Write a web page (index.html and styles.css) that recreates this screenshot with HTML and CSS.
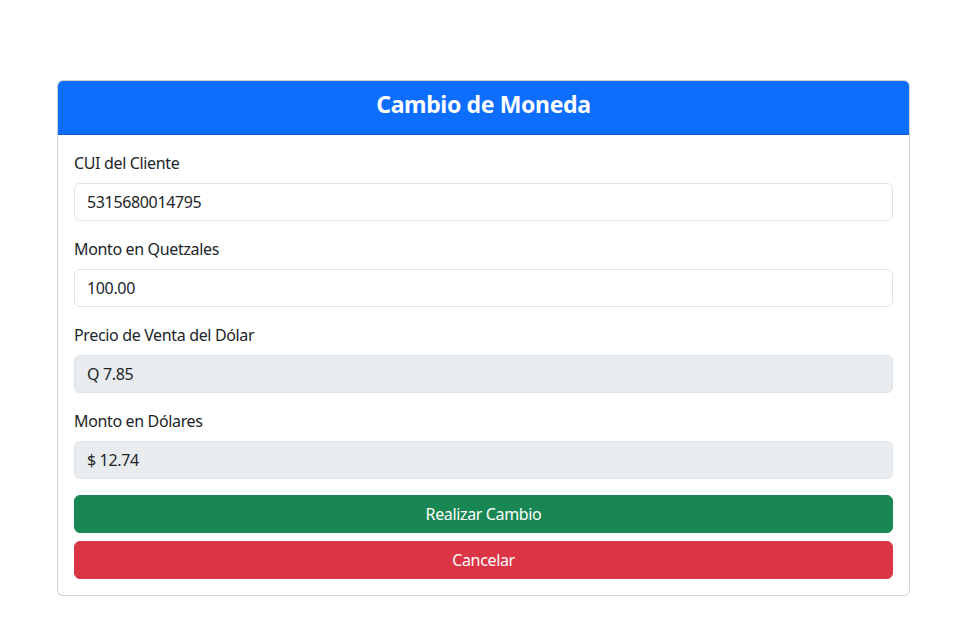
FILE: index.html
```html
<!DOCTYPE html>
<html lang="es">
<head>
<meta charset="utf-8">
<title>Cambio de Moneda</title>
<link rel="stylesheet" href="styles.css">
</head>
<body>
<div class="page">
  <div class="card">
    <div class="card-header">
      <h3 class="title">Cambio de Moneda</h3>
    </div>
    <form class="card-body">
      <div class="field">
        <label class="label">CUI del Cliente</label>
        <div class="input">5315680014795</div>
      </div>
      <div class="field">
        <label class="label">Monto en Quetzales</label>
        <div class="input">100.00</div>
      </div>
      <div class="field">
        <label class="label">Precio de Venta del Dólar</label>
        <div class="input readonly">Q 7.85</div>
      </div>
      <div class="field">
        <label class="label">Monto en Dólares</label>
        <div class="input readonly">$ 12.74</div>
      </div>
      <div class="actions">
        <button type="button" class="btn btn-success">Realizar Cambio</button>
        <button type="button" class="btn btn-danger">Cancelar</button>
      </div>
    </form>
  </div>
</div>
</body>
</html>
```

FILE: styles.css
```css
* { box-sizing: border-box; }
html, body {
  margin: 0;
  padding: 0;
  background: #fff;
}
body {
  font-family: "Segoe UI", "Noto Sans", "Open Sans", sans-serif;
  font-size: 16px;
  line-height: 24px;
  letter-spacing: -0.35px;
  color: #212529;
}
.page {
  padding: 80px 49px 0 57px;
}
.card {
  border: 1px solid rgba(0,0,0,.175);
  border-radius: 6px;
  background: #fff;
  overflow: hidden;
}
.card-header {
  background: #0d6efd;
  border-bottom: 1px solid rgba(0,0,0,.175);
  padding: 8px 16px 15px;
  text-align: center;
}
.title {
  margin: 0;
  color: #fff;
  font-size: 23px;
  line-height: 30px;
  font-weight: 700;
  letter-spacing: -0.35px;
}
.card-body {
  padding: 16px;
  display: flex;
  flex-direction: column;
  margin: 0;
}
.field {
  display: flex;
  flex-direction: column;
  margin-bottom: 16px;
}
.label {
  display: block;
  margin-bottom: 8px;
  line-height: 24px;
}
.input {
  height: 38px;
  padding: 6px 12px;
  border: 1px solid #dee2e6;
  border-radius: 6px;
  background: #fff;
  line-height: 24px;
}
.input.readonly {
  background: #e9ecef;
}
.actions {
  display: flex;
  flex-direction: column;
  gap: 8px;
}
.btn {
  height: 38px;
  border: 1px solid transparent;
  border-radius: 6px;
  color: #fff;
  font-family: inherit;
  font-size: 16px;
  line-height: 24px;
  letter-spacing: -0.35px;
  padding: 6px 12px;
  width: 100%;
}
.btn-success { background: #198754; border-color: #198754; }
.btn-danger { background: #dc3545; border-color: #dc3545; }
```
